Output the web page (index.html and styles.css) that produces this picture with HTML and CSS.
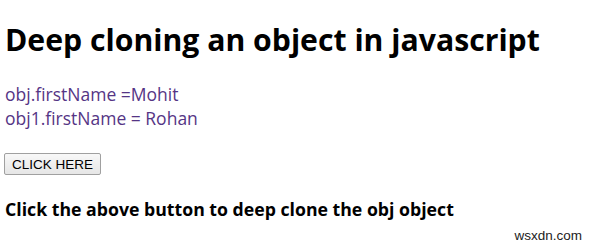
FILE: index.html
```html
<!DOCTYPE html>
<html lang="en">
<head>
    <meta charset="UTF-8" />
    <title>Deep cloning an object in javascript</title>
    <link rel="stylesheet" href="styles.css">
</head>
<body>
    <h1>Deep cloning an object in javascript</h1>
    <div class="result">
        <div>obj.firstName =Mohit</div>
        <div>obj1.firstName = Rohan</div>
    </div>
    <button class="btn">CLICK HERE</button>
    <h3>Click the above button to deep clone the obj object</h3>
    <span class="watermark">wsxdn.com</span>
</body>
</html>
```

FILE: styles.css
```css
* {
    margin: 0;
    padding: 0;
    box-sizing: border-box;
}
body {
    margin: 0;
    padding: 0 5px;
    font-family: 'Open Sans', 'Noto Sans', sans-serif;
    color: #000;
    background: #fff;
    position: relative;
    height: 245px;
}
h1 {
    font-size: 30.2px;
    font-weight: 700;
    padding-top: 18px;
    line-height: 44px;
}
.result {
    margin-top: 20px;
    color: #553585;
    font-size: 17.5px;
    font-weight: 500;
    line-height: 24px;
}
.btn {
    display: block;
    margin-top: 23px;
    margin-left: -1px;
    height: 22px;
    padding: 0 7px;
    font-family: 'Liberation Sans', Arial, sans-serif;
    font-size: 13.5px;
    color: #000;
    background: linear-gradient(#f8f8f8, #e6e6e6);
    border: 1px solid #a0a0a0;
    border-radius: 2px;
}
h3 {
    margin-top: 22px;
    font-size: 17.7px;
    font-weight: 700;
    line-height: 24px;
}
.watermark {
    position: absolute;
    right: 12px;
    bottom: 2px;
    font-family: 'Liberation Sans', Arial, sans-serif;
    font-size: 13.5px;
    color: #222;
}
```
